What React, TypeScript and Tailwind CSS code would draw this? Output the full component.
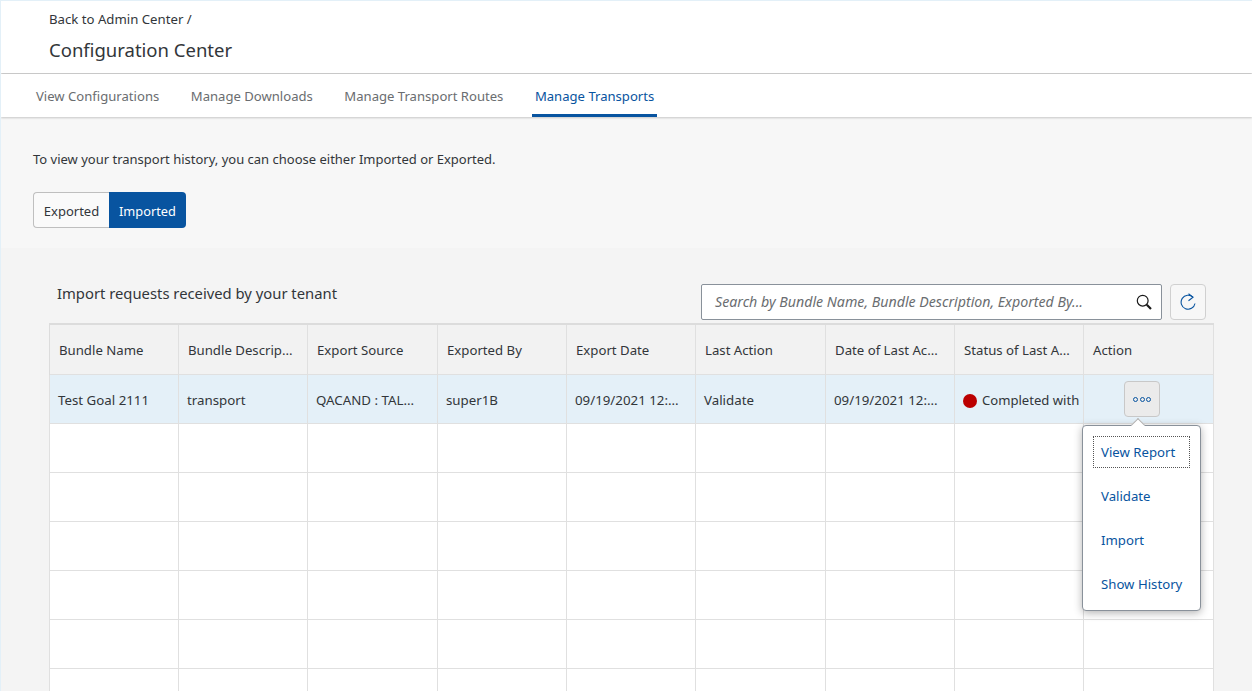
const columns = ['Bundle Name', 'Bundle Descrip...', 'Export Source', 'Exported By', 'Export Date', 'Last Action', 'Date of Last Ac...', 'Status of Last A...', 'Action'];
const firstRow = ['Test Goal 2111', 'transport', 'QACAND : TAL...', 'super1B', '09/19/2021 12:...', 'Validate', '09/19/2021 12:...'];
const tabs = ['View Configurations', 'Manage Downloads', 'Manage Transport Routes', 'Manage Transports'];
const menuItems = ['View Report', 'Validate', 'Import', 'Show History'];
const gridCols = 'grid grid-cols-[129px_129px_130px_129px_129px_130px_129px_129px_130px]';

export default function App() {
  return (
    <div className="h-[691px] overflow-hidden bg-[#f4f4f4] border-l border-t border-[#e3f0f8] font-['Noto_Sans',sans-serif] text-[13.2px] text-[#32363a]">
      <header className="h-[72px] bg-white pl-[48px] pt-[8px] shadow-[0_1px_2px_rgba(0,0,0,0.25)] relative">
        <div className="h-[20px] leading-[20px] text-[13.2px]">Back to Admin Center /</div>
        <h1 className="mt-[7px] text-[18.5px] leading-[28px]">Configuration Center</h1>
      </header>
      <nav className="h-[43px] mt-[1px] bg-white flex pl-[32px] gap-[25.5px] shadow-[0_1px_2px_rgba(0,0,0,0.2)] relative">
        {tabs.map((tab, i) => (
          <div key={tab} className={`px-[3px] pt-[5px] flex items-center border-b-[3px] text-[13.1px] ${i === 3 ? 'border-[#0854a0] text-[#0854a0]' : 'border-transparent text-[#6a6d70]'}`}>
            {tab}
          </div>
        ))}
      </nav>
      <section className="h-[131px] bg-[#f7f7f7] pl-[32px] pt-[33px]">
        <p className="h-[18px] leading-[18px] text-[13px]">To view your transport history, you can choose either Imported or Exported.</p>
        <div className="flex mt-[24px] h-[36px] text-[13px]">
          <button className="w-[76px] pt-[4px] rounded-l border border-r-0 border-[#bfbfbf] bg-[#fafafa]">Exported</button>
          <button className="w-[77px] pt-[4px] rounded-r bg-[#0854a0] text-white text-[12.8px]">Imported</button>
        </div>
      </section>
      <section className="pl-[48px] pr-[38px]">
        <div className="h-[75px] flex relative">
          <div className="ml-[8px] mt-[35px] text-[14.8px] leading-[20px]">Import requests received by your tenant</div>
          <div className="ml-auto mt-[36px] flex gap-[8px] h-[36px] mr-[8px]">
            <div className="w-[461px] bg-white border border-[#89919a] rounded-[2px] flex items-center pl-[13px] pr-[9px]">
              <span className="flex-1 italic text-[#6a6d70] text-[14.2px] whitespace-nowrap">Search by Bundle Name, Bundle Description, Exported By...</span>
              <svg viewBox="0 0 16 16" className="w-[16px] h-[16px] text-[#1a1a1a]" fill="none" stroke="currentColor">
                <circle cx="6.7" cy="6.7" r="5.4" strokeWidth="1.2" />
                <path d="M10.8 10.8 L15 15" strokeWidth="2.2" />
              </svg>
            </div>
            <button className="w-[36px] border border-[#d0d0d0] rounded bg-[#f7f7f7] flex items-center justify-center">
              <svg viewBox="0 0 16 18" className="w-[16px] h-[18px] text-[#0854a0]" fill="none" stroke="currentColor" strokeWidth="1.1">
                <path d="M13 4.2 A7 7 0 1 0 15 10.5" />
                <path d="M8.5 0.7 L13 4.2 L8.5 7.7" />
              </svg>
            </button>
          </div>
        </div>
        <div className="relative">
          <div className={`${gridCols} border-t-2 border-l border-[#dcdcdc] h-[52px] bg-[#f2f2f2] text-[13.2px]`}>
            {columns.map((c) => (
              <div key={c} className="border-r border-b border-[#e0e0e0] pl-[9px] pt-[2px] flex items-center">{c}</div>
            ))}
          </div>
          <div className={`${gridCols} border-l border-[#e0e0e0] h-[49px] bg-[#e4f0f8] text-[13.3px]`}>
            {firstRow.map((c) => (
              <div key={c} className="border-r border-b border-[#e0e0e0] pl-[8px] pt-[4px] flex items-center whitespace-nowrap">{c}</div>
            ))}
            <div className="border-r border-b border-[#e0e0e0] pl-[8px] pt-[4px] flex items-center gap-[5px] whitespace-nowrap overflow-hidden text-[13.1px]">
              <span className="w-[14px] h-[14px] rounded-full bg-[#bb0000] shrink-0" />Completed with
            </div>
            <div className="border-r border-b border-[#e0e0e0] flex items-center pl-[40px]">
              <button className="w-[36px] h-[36px] border border-[#c8c8c8] rounded bg-[#ebebeb] flex items-center justify-center gap-[1.5px]">
                {[0, 1, 2].map((d) => <span key={d} className="w-[5px] h-[5px] rounded-full border border-[#0854a0]" />)}
              </button>
            </div>
          </div>
          {[0, 1, 2, 3, 4, 5].map((r) => (
            <div key={r} className={`${gridCols} border-l border-[#e0e0e0] h-[49px] bg-white`}>
              {columns.map((c) => <div key={c} className="border-r border-b border-[#e0e0e0]" />)}
            </div>
          ))}
          <div className="absolute left-[1033px] top-[102px] w-[119px] h-[186px] bg-white border border-[#89919a] rounded shadow-[0_2px_8px_rgba(0,0,0,0.3)] px-[10px] pt-[10px] text-[13.2px] text-[#0854a0]">
            <span className="absolute left-[50px] -top-[6px] w-[10px] h-[10px] rotate-45 bg-white border-l border-t border-[#b0b0b0]" />
            {menuItems.map((m, i) => (
              <div key={m} className={`h-[32px] mb-[12px] pt-[2px] flex items-center ${i === 0 ? 'pl-[7px] border border-dotted border-[#555]' : 'pl-[8px]'}`}>{m}</div>
            ))}
          </div>
        </div>
      </section>
    </div>
  );
}
